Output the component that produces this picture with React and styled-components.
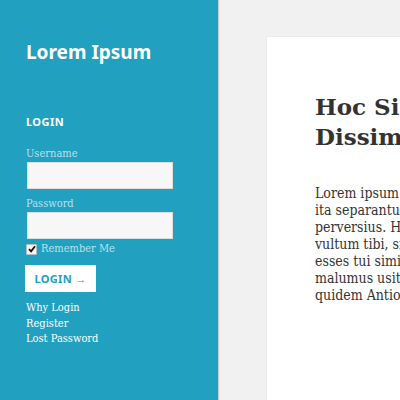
import React from "react";
import styled, { createGlobalStyle } from "styled-components";

const Global = createGlobalStyle`
  html, body { margin: 0; padding: 0; }
  body {
    background: #f1f1f1;
    overflow: hidden;
    width: 400px;
    height: 400px;
  }
`;

const serif = `"DejaVu Serif Condensed", "DejaVu Serif", serif`;

const Page = styled.div`
  display: flex;
  width: 400px;
  height: 400px;
  overflow: hidden;
`;

const Sidebar = styled.aside`
  flex: 0 0 218px;
  background: #21a0c0;
  box-shadow: 1px 0 1px rgba(0, 0, 0, 0.15);
  padding: 40px 0 0 26px;
  box-sizing: border-box;
  color: #fff;
  position: relative;
  z-index: 1;
`;

const SiteTitle = styled.h1`
  margin: 0;
  font-family: "Noto Sans", sans-serif;
  font-weight: 700;
  font-size: 19px;
  line-height: 24px;
  color: #fff;
`;

const WidgetTitle = styled.h2`
  margin: 50px 0 0;
  font-family: "Noto Sans", sans-serif;
  font-weight: 700;
  font-size: 11px;
  letter-spacing: 0.04em;
  line-height: 16px;
  text-transform: uppercase;
  color: #fff;
`;

const Form = styled.form`
  display: flex;
  flex-direction: column;
  margin-top: 17px;
`;

const Label = styled.label`
  font-family: ${serif};
  font-size: 11px;
  line-height: 14px;
  color: rgba(255, 255, 255, 0.7);
  margin-top: ${(p) => p.$top || 0}px;
`;

const Input = styled.input`
  display: block;
  width: 146px;
  height: 27px;
  box-sizing: border-box;
  margin: 1px 0 0 1px;
  background: #f7f7f7;
  border: 1px solid rgba(0, 0, 0, 0.1);
  outline: none;
`;

const CheckRow = styled.label`
  display: flex;
  align-items: center;
  gap: 4px;
  margin-top: 3px;
  font-family: ${serif};
  font-size: 11px;
  line-height: 14px;
  color: rgba(255, 255, 255, 0.7);
`;

const CheckBox = styled.span`
  display: inline-flex;
  align-items: center;
  justify-content: center;
  width: 9px;
  height: 9px;
  background: #f4f4f4;
  border: 1px solid #bcbcbc;
  border-radius: 1px;
  margin-left: 0;
`;

const Button = styled.button`
  align-self: flex-start;
  margin-top: 9px;
  margin-left: -1px;
  width: 71px;
  height: 27px;
  background: #fff;
  border: none;
  font-family: "Noto Sans", sans-serif;
  font-weight: 700;
  font-size: 11px;
  letter-spacing: 0.03em;
  color: #21a0c0;
  padding: 0;
`;

const Links = styled.ul`
  list-style: none;
  margin: 8px 0 0;
  padding: 0;
`;

const LinkItem = styled.li`
  font-family: ${serif};
  font-size: 11px;
  line-height: 15.5px;
  color: #fff;
`;

const Main = styled.main`
  flex: 1;
  padding: 37px 0 0 49px;
  min-width: 0;
`;

const Card = styled.article`
  background: #fff;
  box-shadow: 0 0 1px rgba(0, 0, 0, 0.15);
  width: 500px;
  height: 500px;
  padding: 55px 0 0 48px;
  box-sizing: border-box;
`;

const Heading = styled.h2`
  margin: 0;
  font-family: "DejaVu Serif", serif;
  font-weight: 700;
  font-size: 23px;
  line-height: 30px;
  color: #333;
  white-space: nowrap;
`;

const Body = styled.div`
  margin-top: 33px;
  font-family: ${serif};
  font-size: 14px;
  line-height: 17px;
  color: #333;
`;

const Line = styled.div`
  white-space: nowrap;
`;

const lines = [
  "Lorem ipsum dolor sit amet, consectetur adipiscing elit. Quae cum",
  "ita separantur, ut disiuncta sint, quo nihil potest fieri",
  "perversius. Hoc est non dividere, sed frangere. Quem si",
  "vultum tibi, si incessum fingeres, quo gravior viderere, non",
  "esses tui similis; Itaque hic ipse iam pridem est reiectus;",
  "malumus usitate loqui. Sed residamus, inquit, si placet. Et",
  "quidem Antiochum, magistrum meum, video ita dicere.",
];

function CheckMark() {
  return (
    <svg width="8" height="8" viewBox="0 0 8 8" aria-hidden="true">
      <path d="M1 4.2 L3.1 6.4 L7 1.2" fill="none" stroke="#111" strokeWidth="1.8" />
    </svg>
  );
}

export default function App() {
  return (
    <>
      <Global />
      <Page>
        <Sidebar>
          <SiteTitle>Lorem Ipsum</SiteTitle>
          <WidgetTitle>Login</WidgetTitle>
          <Form onSubmit={(e) => e.preventDefault()}>
            <Label>Username</Label>
            <Input type="text" />
            <Label $top={8}>Password</Label>
            <Input type="password" />
            <CheckRow>
              <CheckBox>
                <CheckMark />
              </CheckBox>
              Remember Me
            </CheckRow>
            <Button type="submit">LOGIN →</Button>
          </Form>
          <Links>
            <LinkItem>Why Login</LinkItem>
            <LinkItem>Register</LinkItem>
            <LinkItem>Lost Password</LinkItem>
          </Links>
        </Sidebar>
        <Main>
          <Card>
            <Heading>Hoc Sic Est Quid</Heading>
            <Heading>Dissimulas</Heading>
            <Body>
              {lines.map((l, i) => (
                <Line key={i}>{l}</Line>
              ))}
            </Body>
          </Card>
        </Main>
      </Page>
    </>
  );
}
